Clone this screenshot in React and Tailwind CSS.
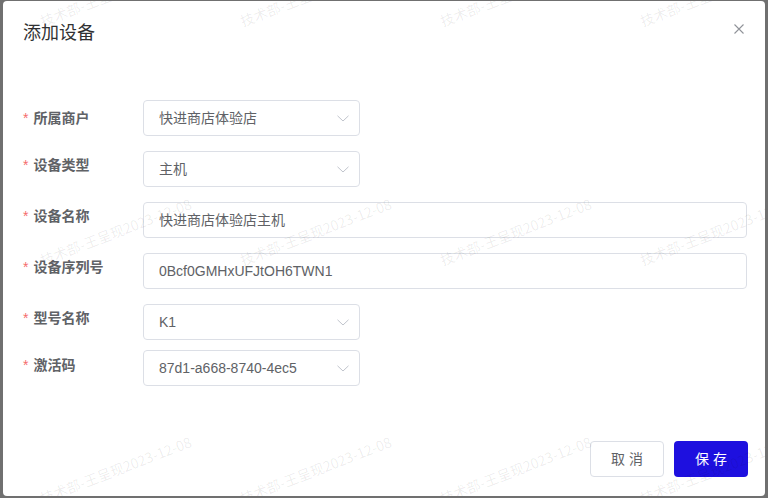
import React from 'react';

const FONT = "font-['Liberation_Sans','Noto_Sans_CJK_SC',sans-serif]";

const fields = [
  { label: '所属商户', value: '快进商店体验店', type: 'select', labelTop: 'mt-2', gap: 'mb-[15px]' },
  { label: '设备类型', value: '主机', type: 'select', labelTop: 'mt-1', gap: 'mb-[15px]' },
  { label: '设备名称', value: '快进商店体验店主机', type: 'input', labelTop: 'mt-1', gap: 'mb-[15px]' },
  { label: '设备序列号', value: '0Bcf0GMHxUFJtOH6TWN1', type: 'input', labelTop: 'mt-1', gap: 'mb-[15px]' },
  { label: '型号名称', value: 'K1', type: 'select', labelTop: 'mt-1', gap: 'mb-[10px]' },
  { label: '激活码', value: '87d1-a668-8740-4ec5', type: 'select', labelTop: 'mt-[5px]', gap: '' },
];

// watermark anchors (bottom-left of each text), relative to the page
const marks = [];
[28, 267, 505].forEach((y) => {
  [-157, 43, 243, 443, 643].forEach((x) => marks.push({ x, y }));
});

const Chevron = () => (
  <svg width="12" height="7" viewBox="0 0 12 7" fill="none">
    <path d="M0.5 0.8 L6 6 L11.5 0.8" stroke="#c0c4cc" strokeWidth="1" />
  </svg>
);

const Field = ({ label, value, type, labelTop, gap }) => (
  <div className={`flex items-start ${gap}`}>
    <div className={`w-[120px] shrink-0 h-5 leading-5 flex items-center ${labelTop}`}>
      <span className="text-[#f56c6c] text-[14px] mr-[5px] leading-none">*</span>
      <span className="text-[14px] font-bold text-[#606266]">{label}</span>
    </div>
    <div
      className={`h-9 border border-[#dcdfe6] rounded bg-white flex items-center pl-[15px] pr-[10px] ${
        type === 'select' ? 'w-[217px]' : 'flex-1'
      }`}
    >
      <span className="flex-1 text-[14px] text-[#606266] truncate">{value}</span>
      {type === 'select' && <Chevron />}
    </div>
  </div>
);

export default function App() {
  return (
    <div className={`w-[768px] h-[498px] bg-[#707070] pt-px pl-[3px] overflow-hidden ${FONT}`}>
      <div className="relative w-[762px] h-[495px] bg-white rounded-sm flex flex-col overflow-hidden">
        {/* Header */}
        <div className="pt-5 px-5 pb-[10px]">
          <h2 className="text-[18px] leading-6 text-[#303133]">添加设备</h2>
        </div>
        <button className="absolute top-[23px] right-[21px] w-[10px] h-[10px]">
          <svg width="10" height="10" viewBox="0 0 10 10">
            <path d="M0.5 0.5 L9.5 9.5 M9.5 0.5 L0.5 9.5" stroke="#909399" strokeWidth="1.1" />
          </svg>
        </button>

        {/* Form */}
        <div className="pt-[45px] pl-5 pr-[18px]">
          {fields.map((f) => (
            <Field key={f.label} {...f} />
          ))}
        </div>

        {/* Footer */}
        <div className="mt-auto flex justify-end gap-[10px] pr-[17px] pb-[19px]">
          <button className="w-[74px] h-9 border border-[#dcdfe6] rounded bg-white text-[14px] text-[#606266]">
            取 消
          </button>
          <button className="w-[74px] h-9 rounded bg-[#1e10df] text-[14px] text-white">
            保 存
          </button>
        </div>

        {/* Watermark */}
        <div className="absolute inset-0 pointer-events-none overflow-hidden">
          {marks.map((m, i) => (
            <span
              key={i}
              className="absolute whitespace-nowrap text-[14px] leading-none text-black/[0.08] origin-bottom-left rotate-[-21deg] font-['Noto_Sans_CJK_SC',sans-serif]"
              style={{ left: m.x - 3, top: m.y - 1 - 14 }}
            >
              技术部-王呈现2023-12-08
            </span>
          ))}
        </div>
      </div>
    </div>
  );
}
